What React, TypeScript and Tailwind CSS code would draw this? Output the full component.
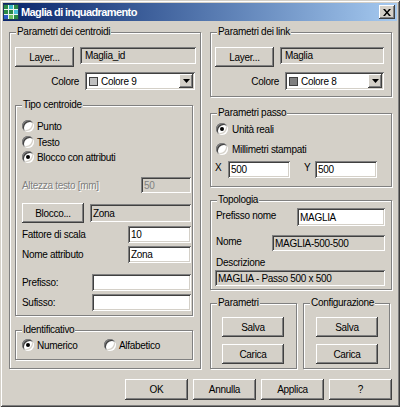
import type { ReactNode } from "react";

const raised =
  "bg-[#d4d0c8] shadow-[inset_-1px_-1px_#404040,inset_1px_1px_#ffffff,inset_-2px_-2px_#808080,inset_2px_2px_#d4d0c8]";
const sunken =
  "shadow-[inset_1px_1px_#808080,inset_-1px_-1px_#ffffff,inset_2px_2px_#404040,inset_-2px_-2px_#d4d0c8]";

const Button = ({ label, className }: { label: string; className: string }) => (
  <button type="button" className={`flex items-center justify-center ${raised} ${className}`}>
    {label}
  </button>
);

interface FieldProps {
  value: string;
  className: string;
  gray?: boolean;
  disabled?: boolean;
  wide?: boolean;
}

const Field = ({ value, className, gray, disabled, wide }: FieldProps) => (
  <div
    className={`flex shrink-0 items-center overflow-hidden whitespace-nowrap ${sunken} ${
      gray ? "bg-[#d4d0c8]" : "bg-white"
    } ${disabled ? "text-[#808080]" : ""} ${wide ? "pl-[5px]" : "pl-[3px]"} ${className}`}
  >
    {value}
  </div>
);

const Radio = ({ checked }: { checked?: boolean }) => (
  <span
    className={`flex h-[12px] w-[12px] shrink-0 items-center justify-center rounded-full bg-white ${sunken}`}
  >
    {checked && <span className="h-[4px] w-[4px] rounded-full bg-black" />}
  </span>
);

const Combo = ({ value, swatch, className }: { value: string; swatch: string; className: string }) => (
  <div className={`flex shrink-0 items-center bg-white pl-[4px] pr-[2px] ${sunken} ${className}`}>
    <span className={`h-[9px] w-[9px] border border-[#404040] ${swatch}`} />
    <span className="ml-[3px] flex-1">{value}</span>
    <span className={`flex h-[14px] w-[14px] items-center justify-center ${raised}`}>
      <svg width="7" height="4" viewBox="0 0 7 4">
        <path d="M0 0h7L3.5 4z" fill="#000" />
      </svg>
    </span>
  </div>
);

const Group = ({ title, className, children }: { title: string; className: string; children: ReactNode }) => (
  <div
    className={`relative shrink-0 border border-[#808080] shadow-[inset_1px_1px_#ffffff,1px_1px_#ffffff] ${className}`}
  >
    <span className="absolute left-[6px] top-[-8px] bg-[#d4d0c8] px-[1px] leading-[13px]">{title}</span>
    {children}
  </div>
);

const RadioRow = ({ label, checked, className }: { label: string; checked?: boolean; className: string }) => (
  <div className={`flex h-[12px] items-center ${className}`}>
    <Radio checked={checked} />
    <span className="ml-[3px]">{label}</span>
  </div>
);

const AppIcon = () => (
  <svg width="16" height="16" viewBox="0 0 16 16" className="shrink-0">
    <rect width="16" height="16" fill="#2a8a46" />
    <rect x="5" y="0" width="6" height="6" fill="#38b8c8" />
    <rect x="0" y="10" width="6" height="6" fill="#2a5cc8" />
    <rect x="10" y="5" width="6" height="6" fill="#4ac0d8" />
    <rect x="5" y="10" width="6" height="6" fill="#70c060" />
    <path d="M5.5 0v16M10.5 0v16M0 5.5h16M0 10.5h16" stroke="#e8f4f0" strokeWidth="1" />
    <rect x="0.5" y="0.5" width="15" height="15" fill="none" stroke="#1a3a5a" />
  </svg>
);

export default function App() {
  return (
    <div className="h-[407px] w-[400px] bg-[#d4d0c8] p-[3px] font-['Liberation_Sans',Arial,sans-serif] text-[10px] leading-[13px] tracking-[-0.3px] text-black shadow-[inset_1px_1px_#d4d0c8,inset_-1px_-1px_#404040,inset_2px_2px_#ffffff,inset_-2px_-2px_#808080]">
      {/* title bar */}
      <div className="flex h-[18px] items-center bg-linear-to-r from-[#0a246a] to-[#a6caf0] pr-[2px]">
        <AppIcon />
        <span className="ml-[2px] flex-1 text-[11px] font-bold tracking-[-0.6px] text-white">
          Maglia di inquadramento
        </span>
        <span className={`flex h-[14px] w-[16px] items-center justify-center ${raised}`}>
          <svg width="8" height="7" viewBox="0 0 8 7">
            <path d="M0 0h2l2 2.5L6 0h2L5 3.5 8 7H6L4 4.5 2 7H0l3-3.5z" fill="#000" />
          </svg>
        </span>
      </div>

      <div className="ml-[6px] mt-[11px] flex">
        {/* left column */}
        <Group title="Parametri dei centroidi" className="h-[337px] w-[192px]">
          <div className="ml-[5px] mt-[14px] flex items-start gap-[6px]">
            <Button label="Layer..." className="h-[20px] w-[59px]" />
            <Field value="Maglia_id" gray wide className="h-[17px] w-[116px]" />
          </div>
          <div className="mr-[5px] mt-[5px] flex items-center justify-end gap-[6px]">
            <span>Colore</span>
            <Combo value="Colore 9" swatch="bg-[#c0c0c0]" className="h-[18px] w-[110px]" />
          </div>

          <Group title="Tipo centroide" className="ml-[5px] mt-[15px] h-[211px] w-[178px]">
            <RadioRow label="Punto" className="ml-[6px] mt-[14px]" />
            <RadioRow label="Testo" className="ml-[6px] mt-[4px]" />
            <RadioRow label="Blocco con attributi" checked className="ml-[6px] mt-[3px]" />
            <div className="ml-[6px] mt-[14px] flex items-center">
              <span className="w-[119px] text-[#808080] [text-shadow:1px_1px_#ffffff]">Altezza testo [mm]</span>
              <Field value="50" gray disabled className="h-[16px] w-[50px]" />
            </div>
            <div className="ml-[6px] mt-[10px] flex items-center gap-[6px]">
              <Button label="Blocco..." className="h-[20px] w-[62px]" />
              <Field value="Zona" gray className="h-[18px] w-[101px]" />
            </div>
            <div className="ml-[6px] mt-[3px] flex items-center">
              <span className="w-[106px]">Fattore di scala</span>
              <Field value="10" className="h-[17px] w-[63px]" />
            </div>
            <div className="ml-[6px] mt-[3px] flex items-center">
              <span className="w-[106px]">Nome attributo</span>
              <Field value="Zona" className="h-[17px] w-[63px]" />
            </div>
            <div className="ml-[6px] mt-[11px] flex items-center">
              <span className="w-[70px]">Prefisso:</span>
              <Field value="" className="h-[17px] w-[99px]" />
            </div>
            <div className="ml-[6px] mt-[3px] flex items-center">
              <span className="w-[70px]">Sufisso:</span>
              <Field value="" className="h-[17px] w-[99px]" />
            </div>
          </Group>

          <Group title="Identificativo" className="ml-[5px] mt-[14px] h-[30px] w-[178px]">
            <div className="ml-[6px] mt-[8px] flex h-[12px] items-center">
              <Radio checked />
              <span className="ml-[3px] w-[67px]">Numerico</span>
              <Radio />
              <span className="ml-[3px]">Alfabetico</span>
            </div>
          </Group>
        </Group>

        {/* right column */}
        <div className="ml-[9px] flex w-[182px] flex-col">
          <Group title="Parametri dei link" className="h-[65px] w-[182px]">
            <div className="ml-[4px] mt-[14px] flex items-start gap-[6px]">
              <Button label="Layer..." className="h-[20px] w-[59px]" />
              <Field value="Maglia" gray wide className="h-[17px] w-[104px]" />
            </div>
            <div className="mr-[7px] mt-[5px] flex items-center justify-end gap-[6px]">
              <span>Colore</span>
              <Combo value="Colore 8" swatch="bg-[#808080]" className="h-[18px] w-[99px]" />
            </div>
          </Group>

          <Group title="Parametri passo" className="mt-[16px] h-[74px] w-[182px]">
            <div className="ml-[5px] mt-[9px] flex h-[12px] items-center gap-[1px]">
              <Radio checked />
              <span className="ml-[3px]">Unità reali</span>
            </div>
            <div className="ml-[5px] mt-[8px] flex h-[12px] items-center gap-[1px]">
              <Radio />
              <span className="ml-[3px]">Millimetri stampati</span>
            </div>
            <div className="ml-[4px] mt-[6px] flex items-start">
              <span className="w-[13px]">X</span>
              <Field value="500" className="h-[17px] w-[62px]" />
              <span className="ml-[14px] w-[11px]">Y</span>
              <Field value="500" className="h-[17px] w-[62px]" />
            </div>
          </Group>

          <Group title="Topologia" className="mt-[13px] h-[90px] w-[182px]">
            <div className="ml-[5px] mt-[7px] flex items-start">
              <span className="w-[81px] pt-[1px]">Prefisso nome</span>
              <Field value="MAGLIA" className="h-[18px] w-[88px]" />
            </div>
            <div className="ml-[5px] mt-[9px] flex items-start">
              <span className="w-[56px]">Nome</span>
              <Field value="MAGLIA-500-500" gray className="h-[16px] w-[113px]" />
            </div>
            <div className="ml-[5px] mt-[5px]">Descrizione</div>
            <div className="ml-[4px] mt-[1px] flex">
              <Field value="MAGLIA - Passo 500 x 500" gray className="h-[16px] w-[170px]" />
            </div>
          </Group>

          <div className="mt-[13px] flex gap-[6px]">
            <Group title="Parametri" className="h-[66px] w-[87px]">
              <Button label="Salva" className="ml-[11px] mt-[13px] h-[20px] w-[62px]" />
              <Button label="Carica" className="ml-[11px] mt-[7px] h-[20px] w-[62px]" />
            </Group>
            <Group title="Configurazione" className="h-[66px] w-[87px]">
              <Button label="Salva" className="ml-[12px] mt-[13px] h-[20px] w-[62px]" />
              <Button label="Carica" className="ml-[12px] mt-[7px] h-[20px] w-[62px]" />
            </Group>
          </div>
        </div>
      </div>

      {/* dialog buttons */}
      <div className="ml-[122px] mt-[10px] flex gap-[5px]">
        <Button label="OK" className="h-[21px] w-[63px]" />
        <Button label="Annulla" className="h-[21px] w-[63px]" />
        <Button label="Applica" className="h-[21px] w-[63px]" />
        <Button label="?" className="h-[21px] w-[63px]" />
      </div>
    </div>
  );
}
